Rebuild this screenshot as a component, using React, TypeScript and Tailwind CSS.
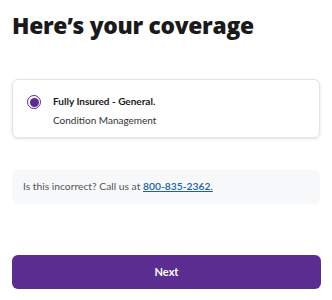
import React from 'react';

export default function App() {
  return (
    <div className="w-[332px] h-[300px] bg-white px-3 pt-[12px] font-['Lato',sans-serif] text-[#1a1a1a]">
      <h1 className="font-['Open_Sans',sans-serif] text-[22.8px] font-extrabold leading-[28px] tracking-[-0.3px]">Here’s your coverage</h1>

      <div className="mt-[39px] h-[59px] rounded-md border border-[#e4e4e4] shadow-[0_1px_3px_rgba(0,0,0,0.12)] flex items-start px-[14px] pt-[14px]">
        <span className="mt-[1px] w-[14px] h-[14px] rounded-full border border-[#5b2d91] flex items-center justify-center shrink-0">
          <span className="w-[9px] h-[9px] rounded-full bg-[#5b2d91]" />
        </span>
        <div className="ml-[12px]">
          <div className="text-[10px] font-bold leading-[14px]">Fully Insured - General.</div>
          <div className="mt-[5px] text-[10px] leading-[14px] text-[#333]">Condition Management</div>
        </div>
      </div>

      <div className="mt-[32px] h-[34px] rounded-md bg-[#f7f8f9] flex items-center px-[11px] text-[10.3px] text-[#555]">
        <span>
          Is this incorrect? Call us at{' '}
          <a className="text-[#1d5fa8] underline font-semibold">800-835-2362.</a>
        </span>
      </div>

      <button className="mt-[51px] w-[309px] h-[34px] rounded-md bg-[#5b2d91] text-white text-[11px] font-bold">
        Next
      </button>
    </div>
  );
}
